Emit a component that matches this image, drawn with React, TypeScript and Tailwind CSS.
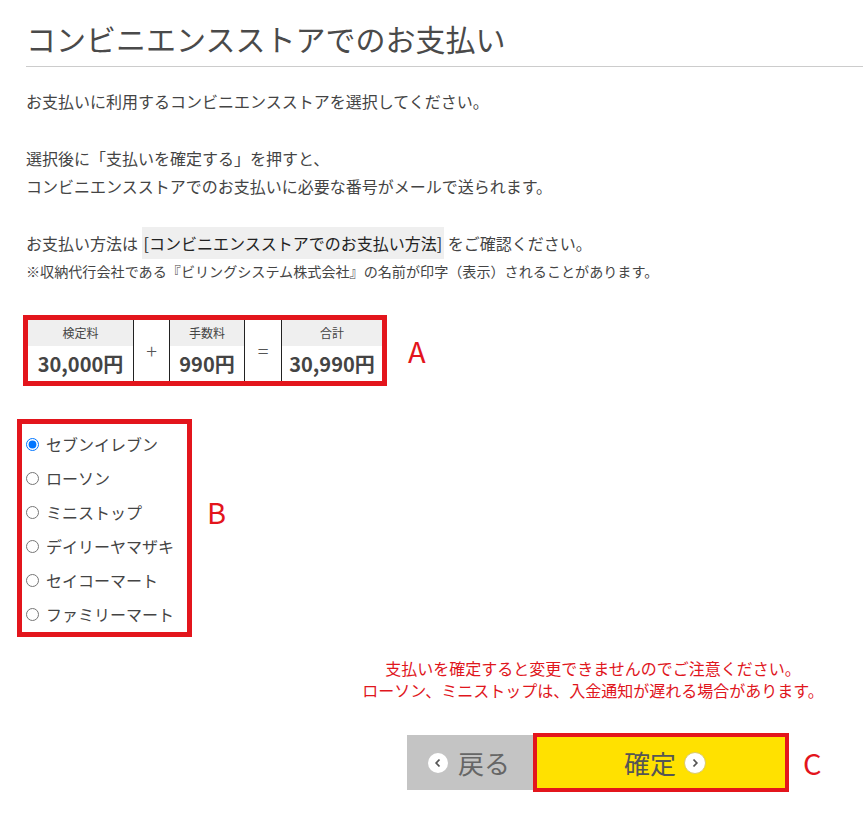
import React from 'react';

const stores = ['セブンイレブン', 'ローソン', 'ミニストップ', 'デイリーヤマザキ', 'セイコーマート', 'ファミリーマート'];

function Chevron({ dir }: { dir: 'left' | 'right' }) {
  return (
    <span
      className={
        dir === 'left'
          ? 'flex h-[20px] w-[20px] items-center justify-center rounded-full bg-white'
          : 'flex h-[22px] w-[22px] items-center justify-center rounded-full border border-[#d9c96a] bg-white'
      }
    >
      <svg width="8" height="10" viewBox="0 0 8 10">
        <path
          d={dir === 'left' ? 'M5.5 1.5 2.2 5l3.3 3.5' : 'M2.5 1.5 5.8 5 2.5 8.5'}
          fill="none"
          stroke="#555"
          strokeWidth="1.8"
        />
      </svg>
    </span>
  );
}

export default function App() {
  const [store, setStore] = React.useState(stores[0]);

  return (
    <div className="h-[819px] w-full overflow-hidden bg-white pl-[26px] pt-[14px] font-['Noto_Sans_CJK_JP','Noto_Sans',sans-serif] text-[#444]">
      <h1 className="border-b border-[#cccccc] pb-[4px] text-[30px] font-normal leading-[48px] text-[#4a4a4a]">
        コンビニエンスストアでのお支払い
      </h1>

      <p className="mt-[20px] text-[16px] leading-[28px]">お支払いに利用するコンビニエンスストアを選択してください。</p>

      <p className="mt-[29px] text-[16px] leading-[28px]">
        選択後に「支払いを確定する」を押すと、
        <br />
        コンビニエンスストアでのお支払いに必要な番号がメールで送られます。
      </p>

      <p className="mt-[29px] text-[16px] leading-[28px]">
        お支払い方法は <span className="bg-[#efefef] px-[2px] py-[4px] text-[#222]">[コンビニエンスストアでのお支払い方法]</span> をご確認ください。
      </p>
      <p className="text-[14.1px] leading-[28px]">※収納代行会社である『ビリングシステム株式会社』の名前が印字（表示）されることがあります。</p>

      {/* A: fee table */}
      <div className="mt-[30px] ml-[-3px] flex items-center">
        <div className="flex border-[5px] border-[#e3151c] text-[#444]">
          <div className="flex w-[106px] flex-col border-r border-[#222]">
            <div className="flex h-[26px] items-center justify-center bg-[#efefef] text-[12px]">検定料</div>
            <div className="flex h-[35px] items-center justify-center text-[20px] font-bold">30,000円</div>
          </div>
          <div className="flex w-[36px] items-center justify-center border-r border-[#222] text-[20px] font-light text-[#555]">+</div>
          <div className="flex w-[75px] flex-col border-r border-[#222]">
            <div className="flex h-[26px] items-center justify-center bg-[#efefef] text-[12px]">手数料</div>
            <div className="flex h-[35px] items-center justify-center text-[20px] font-bold">990円</div>
          </div>
          <div className="flex w-[37px] items-center justify-center border-r border-[#222] text-[20px] font-light text-[#555]">=</div>
          <div className="flex w-[100px] flex-col">
            <div className="flex h-[26px] items-center justify-center bg-[#efefef] text-[12px]">合計</div>
            <div className="flex h-[35px] items-center justify-center text-[20px] font-bold">30,990円</div>
          </div>
        </div>
        <span className="ml-[21px] text-[29px] leading-none text-[#e3151c]">A</span>
      </div>

      {/* B: store radios */}
      <div className="mt-[33px] ml-[-9px] flex items-start">
        <div className="w-[175px] border-[5px] border-[#e3151c] pl-[4px] pt-[3px] pb-[1px]">
          {stores.map((s) => (
            <label key={s} className="flex h-[34px] items-center gap-[7px] text-[16px] text-[#444]">
              <input
                type="radio"
                name="store"
                checked={store === s}
                onChange={() => setStore(s)}
                className="m-0 h-[13px] w-[13px] accent-[#0075ff]"
              />
              {s}
            </label>
          ))}
        </div>
        <span className="ml-[15px] mt-[72px] text-[29px] leading-[40px] text-[#e3151c]">B</span>
      </div>

      <div className="mt-[20px] ml-[327px] w-[480px] text-center text-[16px] leading-[22px] text-[#e0161d]">
        支払いを確定すると変更できませんのでご注意ください。
        <br />
        ローソン、ミニストップは、入金通知が遅れる場合があります。
      </div>

      {/* C: buttons */}
      <div className="mt-[32px] ml-[381px] flex items-center">
        <button className="flex h-[55px] w-[126px] items-center gap-[10px] bg-[#c4c4c4] pl-[21px] text-[26px] text-[#666]">
          <Chevron dir="left" />
          戻る
        </button>
        <button className="flex h-[59px] w-[256px] items-center justify-center gap-[8px] border-[4px] border-[#e3151c] bg-[#ffe100] pl-[8px] text-[26px] text-[#555]">
          確定
          <Chevron dir="right" />
        </button>
        <span className="ml-[14px] text-[29px] leading-none text-[#e3151c]">C</span>
      </div>
    </div>
  );
}
